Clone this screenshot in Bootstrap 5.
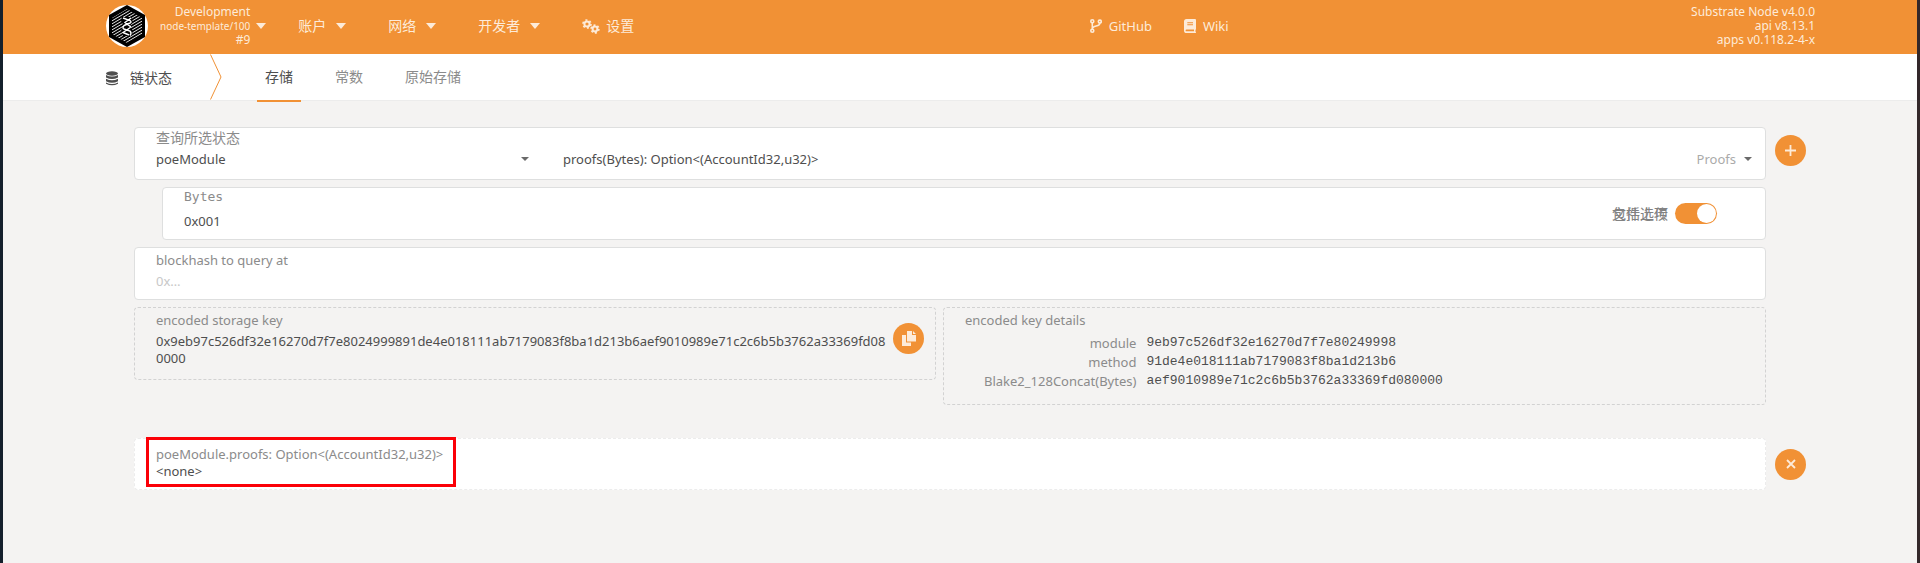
<!DOCTYPE html>
<html lang="zh-CN">
<head>
<meta charset="utf-8">
<meta name="viewport" content="width=device-width, initial-scale=1">
<title>链状态</title>
<link href="https://cdn.jsdelivr.net/npm/bootstrap@5.3.0/dist/css/bootstrap.min.css" rel="stylesheet">
<style>
:root { --accent: #f19135; --ink: #4e4e4e; --soft: #8b8b8b; --line: #dedfdf; }
body {
  font-family: "Noto Sans", "Noto Sans CJK SC", sans-serif;
  font-size: 13px; line-height: 20px; color: var(--ink);
  background: #f4f3f2; min-height: 100vh;
  border-left: 3px solid #14202c; border-right: 3px solid #33282a;
}
.zh { font-size: 14px; }
.page-width { max-width: 1710px; margin: 0 auto; }
.top-bar { background: var(--accent); color: #fdebd9; height: 54px; padding-bottom: 2px; }
.top-bar a { color: inherit; text-decoration: none; }
.chain-btn { background: none; border: 0; padding: 0; margin-left: 11px; gap: 6px; color: inherit; text-align: right; font-size: 12px; line-height: 14px; }
.chain-btn .node-name { font-size: 10px; }
.versions { font-size: 12px; line-height: 14px; }
.tri { border: 5px solid transparent; border-top: 6px solid currentColor; border-bottom: 0; width: 0; height: 0; flex: none; }
.tri-sm { border-width: 4px 4px 0; color: #6a6a6a; }
.menu-list { gap: 42px; margin-left: 32px; }
.menu-item { gap: 10px; }
.menu-item-icon { gap: 6px; }
.ext-links { gap: 32px; padding-right: 7px; }
.ext-links a { gap: 7px; }
.tab-bar { background: #fff; border-bottom: 1px solid #ececec; height: 47px; }
.tab-link { color: var(--soft); text-decoration: none; padding: 13px 8px 12px; height: 48px; border-bottom: 2px solid transparent; }
.tab-link.active { color: var(--ink); border-color: var(--accent); }
.tab-list { gap: 26px; margin-left: 35px; }
.section-name { width: 105px; gap: 11px; }
.content-col { padding: 26px 9px 0 29px; }
.side-gap { gap: 9px; }
.stack { display: flex; flex-direction: column; gap: 7px; }
.panel { background: #fff; border: 1px solid var(--line); border-radius: 4px; padding: 0 21px; }
.panel-dashed { border: 1px dashed #d2d2d2; border-radius: 4px; padding: 2px 21px 0; }
.query-panel { height: 53px; padding-right: 13px; }
.arg-panel { height: 53px; margin-left: 28px; }
.block-panel { height: 53px; padding-top: 2px; }
.key-row { gap: 7px; }
.key-panel { flex: 0 0 802px; height: 73px; }
.detail-panel { height: 98px; }
.result-row { margin-top: 33px; }
.panel-result { border: 1px dashed #ececec; height: 52px; }
.cap { color: var(--soft); display: block; }
.field { border: 0; outline: 0; padding: 0; background: none; color: var(--ink); width: 100%; appearance: none; line-height: 20px; height: 22px; display: block; }
.field::placeholder { color: #c8c8c8; }
.hint { color: #aaa; }
.pick { min-width: 0; }
.pick-module { flex: 0 0 373px; margin-right: 34px; }
.mono-cap { font-family: "DejaVu Sans Mono", monospace; line-height: 18px; }
.round-btn { width: 31px; height: 31px; border: 0; border-radius: 50%; background: var(--accent); color: #fdebd9; padding: 0; flex: none; display: flex; align-items: center; justify-content: center; }
.toggle { width: 42px; height: 21px; border: 0; border-radius: 11px; background: var(--accent); appearance: none; margin: 0; padding: 1px; display: flex; justify-content: flex-end; }
.toggle::before { content: ""; width: 19px; height: 19px; border-radius: 50%; background: #fff; }
.toggle:not(:checked) { background: #d2d2d2; justify-content: flex-start; }
.toggle-group { gap: 7px; margin-right: 27px; }
.toggle-label { color: #828282; }
.overlay { position: absolute; left: 0; top: 0; }
.copy-spot { position: absolute; right: 11px; top: 15px; }
.key-text { line-height: 17px; margin: 3px 24px 0 0; word-break: break-all; }
.key-table { margin: 4px 0 0 19px; }
.key-table th { font-weight: 400; color: var(--soft); text-align: right; padding: 0 10px 0 0; line-height: 19px; }
.key-table td { font-family: "Liberation Mono", monospace; padding: 1px 0 3px; line-height: 15px; vertical-align: top; }
.result-block { line-height: 17px; padding-top: 7px; }
.marker { position: absolute; left: 11px; top: -2px; width: 310px; height: 50px; border: 3px solid #fb0007; pointer-events: none; }
</style>
</head>
<body>
<header class="top-bar">
  <div class="page-width d-flex justify-content-between align-items-center h-100">
    <div class="d-flex align-items-center">
      <svg width="44" height="44" viewBox="0 0 44 44" aria-hidden="true">
        <defs><clipPath id="hex"><path d="M22 5 37 14V30L22 39 7 30V14Z"/></clipPath></defs>
        <circle cx="22" cy="22" r="21" fill="#fff"/>
        <path d="M22 1 40 11V33L22 43 4 33V11Z" fill="#000"/>
        <g clip-path="url(#hex)" stroke="#fff" stroke-width=".9">
          <path d="M0 18 44-8M0 21 44-5M0 24 44-2M0 27 44 1M0 30 44 4M0 33 44 7M0 36 44 10M0 39 44 13M0 42 44 16M0 45 44 19M0 48 44 22M0 51 44 25M0 54 44 28M0 57 44 31"/>
        </g>
        <path d="M17 13H26L28 18 25 22 28 27 26 32H18L16 27 19 22 16 17Z" fill="#000"/>
        <path d="M18 14 25 16.500Q27 18 25 19L19 21.500M26 14 20 18.500 26 23M19 21.500Q17 24 19 25L25 27Q27 29 25 31.500M26 23 18 28.500 24 31" fill="none" stroke="#fff" stroke-width="1.400"/>
      </svg>
      <button type="button" class="chain-btn d-flex align-items-center">
        <span><span class="d-block">Development</span><span class="d-block node-name">node-template/100</span><span class="d-block">#9</span></span>
        <span class="tri"></span>
      </button>
      <nav class="menu-list zh d-flex align-items-center">
        <a href="#" class="d-flex align-items-center menu-item">账户<span class="tri"></span></a>
        <a href="#" class="d-flex align-items-center menu-item">网络<span class="tri"></span></a>
        <a href="#" class="d-flex align-items-center menu-item">开发者<span class="tri"></span></a>
        <a href="#" class="d-flex align-items-center menu-item-icon">
          <svg width="18" height="15" viewBox="0 0 18 15" fill="none" stroke="currentColor" aria-hidden="true">
            <circle cx="5" cy="5" r="2.600" stroke-width="2"/><circle cx="5" cy="5" r="4" stroke-width="1.600" stroke-dasharray="2 2.190"/>
            <circle cx="13" cy="10" r="2.400" stroke-width="2"/><circle cx="13" cy="10" r="3.900" stroke-width="1.600" stroke-dasharray="2 2.080"/>
          </svg>设置</a>
      </nav>
    </div>
    <nav class="ext-links d-flex">
      <a href="#" class="d-flex align-items-center">
        <svg width="12" height="14" viewBox="0 0 12 14" fill="none" stroke="currentColor" stroke-width="1.600" aria-hidden="true"><circle cx="2.300" cy="2.300" r="1.500"/><circle cx="2.300" cy="11.700" r="1.500"/><circle cx="9.800" cy="2.600" r="1.500"/><path d="M2.300 4v6M9.800 4.200C9.800 8 3 6 2.500 9.500"/></svg>GitHub</a>
      <a href="#" class="d-flex align-items-center">
        <svg width="12" height="14" viewBox="0 0 12 14" fill="currentColor" fill-rule="evenodd" aria-hidden="true"><path d="M2.500 0H11q1 0 1 1v9q0 .6-.5.8v2q.5.1.5.6t-.6.6H2.600Q0 14 0 11.400V2.500Q0 0 2.500 0ZM3.300 3.300v1H9v-1ZM3.300 5.200v1H9v-1ZM2.500 10.500q-.9 0-.9.900t.9.900H10v-1.800Z"/></svg>Wiki</a>
    </nav>
    <div class="versions text-end">Substrate Node v4.0.0<br>api v8.13.1<br>apps v0.118.2-4-x</div>
  </div>
</header>
<div class="tab-bar zh">
  <div class="page-width d-flex">
    <div class="section-name d-flex align-items-center">
      <svg class="flex-shrink-0" width="14" height="15" viewBox="0 0 14 15" fill="currentColor" aria-hidden="true"><ellipse cx="7" cy="2.500" rx="6" ry="2.200"/><path d="M1 4q6 3 12 0v2.500q-6 3.200-12 0ZM1 7.800q6 3 12 0v2.400q-6 3.200-12 0ZM1 11.500q6 3 12 0v1.200q-6 3.300-12 0Z"/></svg>
      <span>链状态</span>
    </div>
    <svg width="12" height="46" viewBox="0 0 12 46" fill="none" stroke="#f19135" aria-hidden="true"><path d="M.5.500 11 23 .5 45.500"/></svg>
    <nav class="tab-list d-flex">
      <a href="#" class="tab-link active" aria-current="page">存储</a>
      <a href="#" class="tab-link">常数</a>
      <a href="#" class="tab-link">原始存储</a>
    </nav>
  </div>
</div>
<main class="page-width">
  <div class="content-col">
    <div class="d-flex side-gap">
      <div class="stack flex-fill pick">
        <div class="panel query-panel">
          <label class="cap zh" for="module">查询所选状态</label>
          <div class="d-flex align-items-center">
            <div class="pick-module d-flex align-items-center">
              <select id="module" class="field"><option>poeModule</option></select><span class="tri tri-sm"></span>
            </div>
            <div class="pick flex-fill d-flex align-items-center">
              <select class="field" aria-label="proofs"><option>proofs(Bytes): Option&lt;(AccountId32,u32)&gt;</option></select>
              <span class="hint me-2">Proofs</span><span class="tri tri-sm"></span>
            </div>
          </div>
        </div>
        <div class="panel arg-panel d-flex justify-content-between">
          <div class="flex-fill">
            <label class="cap mono-cap" for="bytes">Bytes</label>
            <input id="bytes" class="field mt-1" value="0x001">
          </div>
          <div class="toggle-group d-flex align-items-center">
            <label class="toggle-label zh position-relative text-nowrap" for="include"><span>包括选项</span><span class="overlay">文件上传</span></label>
            <input id="include" type="checkbox" role="switch" class="toggle" checked>
          </div>
        </div>
        <div class="panel block-panel">
          <label class="cap" for="hash">blockhash to query at</label>
          <input id="hash" class="field" placeholder="0x…">
        </div>
        <div class="key-row d-flex align-items-start">
          <div class="panel-dashed key-panel position-relative">
            <div class="cap">encoded storage key</div>
            <div class="key-text">0x9eb97c526df32e16270d7f7e8024999891de4e018111ab7179083f8ba1d213b6aef9010989e71c2c6b5b3762a33369fd080000</div>
            <button type="button" class="round-btn copy-spot" aria-label="copy"><svg width="14" height="15" viewBox="0 0 14 15" fill="currentColor" aria-hidden="true"><path d="M0 4h4v7.500h5V15H0ZM5 0h5v4h4v6.500H5ZM11 0l3 3h-3Z"/></svg></button>
          </div>
          <div class="panel-dashed detail-panel flex-fill">
            <div class="cap">encoded key details</div>
            <table class="key-table">
              <tr><th scope="row">module</th><td>9eb97c526df32e16270d7f7e80249998</td></tr>
              <tr><th scope="row">method</th><td>91de4e018111ab7179083f8ba1d213b6</td></tr>
              <tr><th scope="row">Blake2_128Concat(Bytes)</th><td>aef9010989e71c2c6b5b3762a33369fd080000</td></tr>
            </table>
          </div>
        </div>
      </div>
      <button type="button" class="round-btn mt-2" aria-label="add"><svg width="13" height="13" viewBox="0 0 13 13" stroke="currentColor" stroke-width="1.800" aria-hidden="true"><path d="M6.500 1v11M1 6.500h11"/></svg></button>
    </div>
    <div class="result-row d-flex side-gap align-items-center">
      <div class="panel panel-result flex-fill position-relative">
        <div class="result-block"><span class="cap">poeModule.proofs: Option&lt;(AccountId32,u32)&gt;</span>&lt;none&gt;</div>
        <div class="marker"></div>
      </div>
      <button type="button" class="round-btn" aria-label="close"><svg width="10" height="10" viewBox="0 0 10 10" stroke="currentColor" stroke-width="1.800" aria-hidden="true"><path d="m1 1 8 8M9 1 1 9"/></svg></button>
    </div>
  </div>
</main>
<script src="https://cdn.jsdelivr.net/npm/bootstrap@5.3.0/dist/js/bootstrap.bundle.min.js"></script>
</body>
</html>
